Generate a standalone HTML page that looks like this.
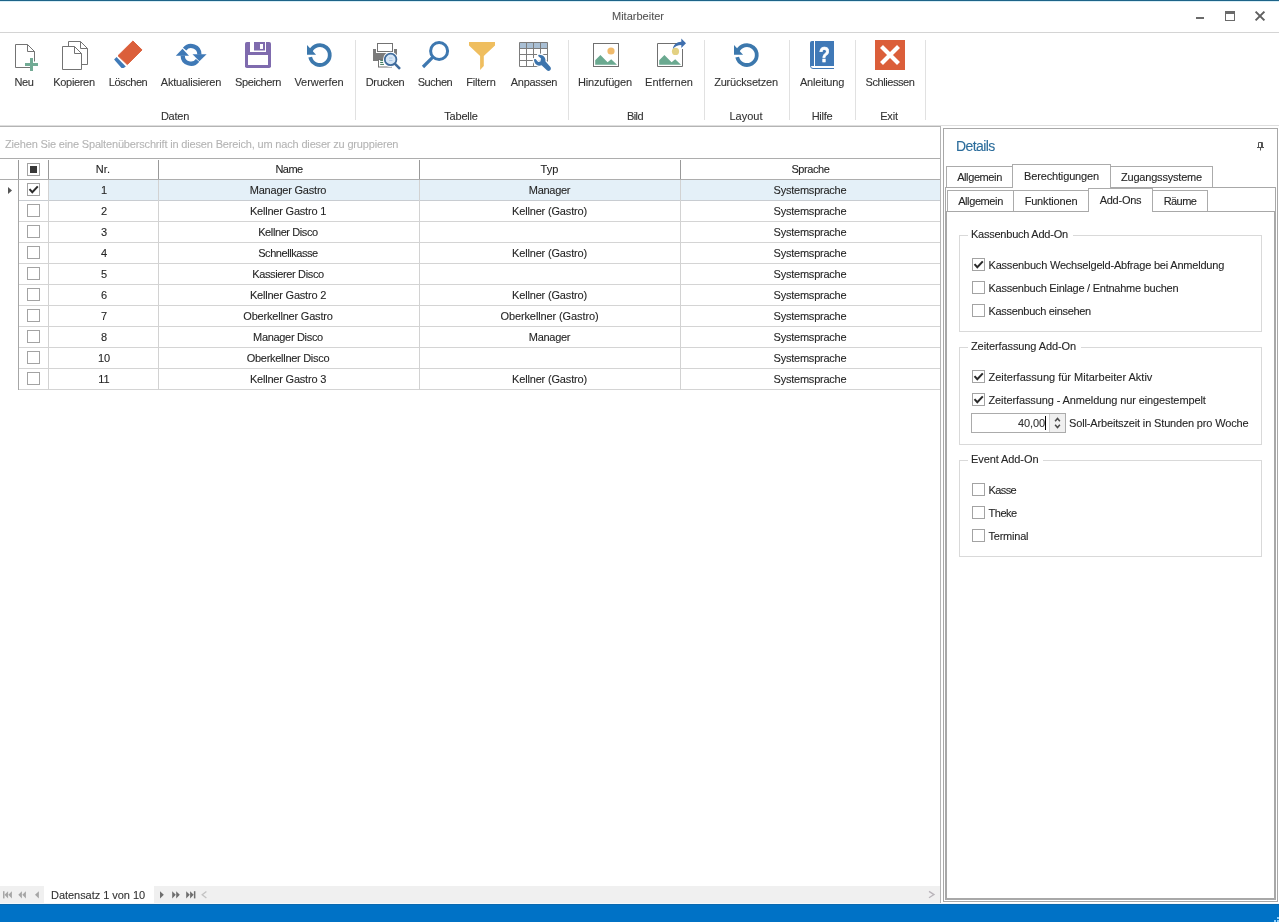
<!DOCTYPE html>
<html lang="de"><head><meta charset="utf-8"><title>Mitarbeiter</title>
<style>
*{box-sizing:border-box;margin:0;padding:0}
html,body{width:1279px;height:922px;overflow:hidden;background:#fff}
body{position:relative;-webkit-text-stroke:0.1px;font-family:"Liberation Sans","DejaVu Sans",sans-serif;font-size:11px;color:#3c3c3c;line-height:13px}
#app{position:absolute;left:0;top:0;width:1279px;height:922px;will-change:transform}
.a{position:absolute}
.t{position:absolute;white-space:nowrap;height:13px;line-height:13px}
.c{text-align:center}
.ln{position:absolute;background:#c6c6c6}
.ic{position:absolute;width:40px;height:40px;overflow:visible}
.lbl{position:absolute;white-space:nowrap;text-align:center;width:100px;margin-left:-50px;top:76px;color:#333}
.grp{position:absolute;white-space:nowrap;text-align:center;width:100px;margin-left:-50px;top:110px;color:#333}
.sep{position:absolute;top:40px;height:80px;width:1px;background:#e1e1e1}
.cb{position:absolute;width:13px;height:13px;border:1px solid #a3a3a3;background:#fff}
.cell{position:absolute;white-space:nowrap;text-align:center;height:13px;line-height:13px;color:#262626}
.tab{position:absolute;border:1px solid #ababab;border-bottom:none;background:#fff;text-align:center;color:#262626;white-space:nowrap}
.gb{position:absolute;border:1px solid #d9d9d9;left:959px;width:303px}
.gbt{position:absolute;background:#fff;padding:0 5px 0 3px;left:968px;white-space:nowrap;color:#262626;height:13px;line-height:13px}
.cl{position:absolute;left:988.5px;white-space:nowrap;color:#262626;height:13px;line-height:13px}
</style></head>
<body>
<div id="app">
<div class="a" style="left:0;top:0;width:1279px;height:1px;background:#1d6388"></div>
<div class="a" style="left:0;top:1px;width:1279px;height:1px;background:#d9eef6"></div>
<div class="t c" style="left:540px;width:196px;top:10px;color:#555;letter-spacing:0.00px">Mitarbeiter</div>
<div class="a" style="left:0;top:32px;width:1279px;height:1px;background:#d4d4d4"></div>
<div class="a" style="left:1196px;top:17px;width:8px;height:2px;background:#6a6a6a"></div>
<div class="a" style="left:1225px;top:11px;width:10px;height:10px;border:1px solid #6a6a6a;border-top-width:3px"></div>
<svg class="a" style="left:1253px;top:9px" width="14" height="14" viewBox="0 0 14 14"><path d="M2.6 2.6 L11.4 11.4 M11.4 2.6 L2.6 11.4" stroke="#5f5f5f" stroke-width="2" fill="none"/></svg>
<svg class="ic" style="left:8px;top:40px" viewBox="0 0 40 40"><path d="M22 27.5 H7.5 V4.5 H19.5 L26.5 11.5 V21.5" fill="#fff" stroke="#737373"/><path d="M19.5 4.5 V11.5 H26.5" fill="none" stroke="#737373"/><path d="M22 18h3v5h5v3h-5v5h-3v-5h-5v-3h5z" fill="#72ab95"/></svg>
<div class="lbl" style="left:24px;letter-spacing:-0.46px">Neu</div>
<svg class="ic" style="left:58px;top:40px" viewBox="0 0 40 40"><path d="M10.5 1.5 H22.5 L29.5 8.5 V24.5 H10.5 Z" fill="#fff" stroke="#737373"/><path d="M22.5 1.5 V8.5 H29.5" fill="none" stroke="#737373"/><path d="M4.5 6.5 H16.5 L23.5 13.5 V29.5 H4.5 Z" fill="#fff" stroke="#737373"/><path d="M16.5 6.5 V13.5 H23.5" fill="none" stroke="#737373"/></svg>
<div class="lbl" style="left:74px;letter-spacing:-0.34px">Kopieren</div>
<svg class="ic" style="left:112px;top:40px" viewBox="0 0 40 40"><path d="M20.9 1 L30 9.9 L15.3 24.6 L6 15.7 Z" fill="#db5f3b" stroke="#db5f3b" stroke-width="1" stroke-linejoin="round"/><path d="M4.5 17 L13.8 26.4 L11.6 27.9 L9.5 27.9 L2.1 19.6 Z" fill="#3f7ab8"/></svg>
<div class="lbl" style="left:128px;letter-spacing:-0.44px">Löschen</div>
<svg class="ic" style="left:175px;top:40px" viewBox="0 0 40 40"><g fill="#3f79b6"><path d="M7.5 8.8 L14 15.7 H0.8 Z"/><path d="M24.4 21.2 L17.5 14.2 H31.6 Z"/></g><g fill="none" stroke="#3f79b6" stroke-width="4.3"><path d="M9.6 9.2 A8.3 8.3 0 0 1 24.4 14.6"/><path d="M22.6 20.4 A8.3 8.3 0 0 1 7.7 15.4"/></g></svg>
<div class="lbl" style="left:191px;letter-spacing:-0.20px">Aktualisieren</div>
<svg class="ic" style="left:242px;top:40px" viewBox="0 0 40 40"><rect x="3" y="2" width="26" height="26" rx="1.8" fill="#7f6bae"/><rect x="8" y="2" width="16" height="10" fill="#fff"/><rect x="12" y="2" width="11" height="8.5" fill="#7f6bae"/><rect x="18" y="4" width="3" height="5" fill="#fff"/><rect x="6" y="15" width="20" height="10" fill="#fff"/></svg>
<div class="lbl" style="left:258px;letter-spacing:-0.39px">Speichern</div>
<svg class="ic" style="left:303px;top:40px" viewBox="0 0 40 40"><path d="M4 4.9 V14.65 H13.1 Z" fill="#3c78ad"/><path d="M7.7 11.3 A9.9 9.9 0 1 1 7.2 17.2" fill="none" stroke="#3c78ad" stroke-width="3.8"/></svg>
<div class="lbl" style="left:319px;letter-spacing:-0.04px">Verwerfen</div>
<svg class="ic" style="left:369px;top:40px" viewBox="0 0 40 40"><path d="M4 9 H7 V13 H25 V9 H28 V21 H4 Z" fill="#7b7b7b"/><rect x="8.5" y="3.5" width="15" height="8" fill="#fff" stroke="#737373"/><rect x="9.5" y="19.5" width="13" height="7.5" fill="#fff" stroke="#737373"/><path d="M11.2 20.6 H14.2 M11.2 22.5 H14.2 M11.2 24.4 H15" stroke="#3f7a5c" stroke-width="1"/><circle cx="21.6" cy="19.4" r="7.6" fill="#fff"/><circle cx="21.6" cy="19.4" r="5.8" fill="#d6e6f6" stroke="#3f6b9c" stroke-width="1.8"/><path d="M20 18 h3.4 M20 20.5 h3.4" stroke="#a9c6e6" stroke-width="1.2"/><path d="M25.8 23.6 L31 28.8" stroke="#3f6b9c" stroke-width="2.6" stroke-linecap="butt"/></svg>
<div class="lbl" style="left:385px;letter-spacing:-0.35px">Drucken</div>
<svg class="ic" style="left:419px;top:40px" viewBox="0 0 40 40"><circle cx="20.1" cy="11" r="8.5" fill="none" stroke="#3e78b0" stroke-width="3"/><path d="M13.6 17.4 L4 27" stroke="#3e78b0" stroke-width="3.2"/></svg>
<div class="lbl" style="left:435px;letter-spacing:-0.47px">Suchen</div>
<svg class="ic" style="left:465px;top:40px" viewBox="0 0 40 40"><path d="M4 2 H30 V5.5 L18.8 16 V26 L15.1 30 V16 L4 5.5 Z" fill="#efbe5f"/></svg>
<div class="lbl" style="left:481px;letter-spacing:-0.12px">Filtern</div>
<svg class="ic" style="left:518px;top:40px" viewBox="0 0 40 40"><rect x="1.5" y="2.5" width="28" height="6" fill="#a9bfd4"/><path d="M1.5 2.5 H29.5 V26.5 H1.5 Z M8.5 2.5 V26.5 M15.5 2.5 V26.5 M22.5 2.5 V26.5 M1.5 8.5 H29.5 M1.5 14.5 H29.5 M1.5 20.5 H29.5" fill="none" stroke="#7c7c7c"/><path d="M20.2 15 C22.2 14.5 24.6 15.2 26.1 16.8 C27.3 18.1 27.7 19.7 27.4 21.2 L32.4 27 C33.3 28.2 32.9 29.6 32.1 30.3 C31.3 31 29.9 31.2 28.9 30.2 L23.6 25.2 C22 25.9 20 25.8 18.6 24.8 C16.8 23.5 15.8 21.3 16 19.2 L17.6 19 L20.2 21.9 L22.4 21.4 L23 18.6 L20.4 16.3 Z" fill="#fff" stroke="#fff" stroke-width="2.6" stroke-linejoin="round"/><path d="M20.2 15 C22.2 14.5 24.6 15.2 26.1 16.8 C27.3 18.1 27.7 19.7 27.4 21.2 L32.4 27 C33.3 28.2 32.9 29.6 32.1 30.3 C31.3 31 29.9 31.2 28.9 30.2 L23.6 25.2 C22 25.9 20 25.8 18.6 24.8 C16.8 23.5 15.8 21.3 16 19.2 L17.6 19 L20.2 21.9 L22.4 21.4 L23 18.6 L20.4 16.3 Z" fill="#3d74ac"/></svg>
<div class="lbl" style="left:534px;letter-spacing:-0.33px">Anpassen</div>
<svg class="ic" style="left:589px;top:40px" viewBox="0 0 40 40"><rect x="4.5" y="3.5" width="25" height="23" fill="#fff" stroke="#707070"/><circle cx="22" cy="11" r="3.6" fill="#f0ba6c"/><path d="M6.2 24.7 V20.3 L11.4 15.1 L18.6 22.3 L22.2 19.2 L28 24.7 Z" fill="#6aa990"/></svg>
<div class="lbl" style="left:605px;letter-spacing:-0.18px">Hinzufügen</div>
<svg class="ic" style="left:653px;top:40px" viewBox="0 0 40 40"><path d="M25.4 3.5 H4.5 V26.5 H29.5 V9" fill="#fff" stroke="#707070"/><circle cx="22.5" cy="11.4" r="3.6" fill="#e3d183"/><path d="M6.2 24.7 V20.3 L11.4 15.1 L18.6 22.3 L22.2 19.2 L28 24.7 Z" fill="#6aa990"/><path d="M19.8 9 C20.5 4.5 24 1.6 28.3 1.7 V-1.4 L33 3.3 L28.3 7.9 V4.9 C25 4.9 22 6 19.8 9 Z" fill="#3f6fae"/></svg>
<div class="lbl" style="left:669px;letter-spacing:0.01px">Entfernen</div>
<svg class="ic" style="left:730px;top:40px" viewBox="0 0 40 40"><path d="M4 4.9 V14.65 H13.1 Z" fill="#3c78ad"/><path d="M7.7 11.3 A9.9 9.9 0 1 1 7.2 17.2" fill="none" stroke="#3c78ad" stroke-width="3.8"/></svg>
<div class="lbl" style="left:746px;letter-spacing:-0.20px">Zurücksetzen</div>
<svg class="ic" style="left:806px;top:40px" viewBox="0 0 40 40"><path d="M4 3 Q4 1 6 1 H8 V26 H4 Z" fill="#4079b7"/><rect x="9" y="1" width="19" height="25" fill="#4079b7"/><path d="M4.5 25 V26 Q4.5 28.5 7 28.5 H28" fill="none" stroke="#4079b7" stroke-width="1"/><text transform="translate(18.4 21.6) scale(.78 1)" x="0" y="0" text-anchor="middle" font-family="Liberation Sans, sans-serif" font-weight="bold" font-size="22.5" fill="#fff" stroke="#fff" stroke-width=".7">?</text></svg>
<div class="lbl" style="left:822px;letter-spacing:-0.18px">Anleitung</div>
<svg class="ic" style="left:874px;top:40px" viewBox="0 0 40 40"><rect x="1" y="0" width="30" height="30" fill="#db5e3a"/><path d="M7.5 6.5 L24.5 23.5 M24.5 6.5 L7.5 23.5" stroke="#fff" stroke-width="4.2"/></svg>
<div class="lbl" style="left:890px;letter-spacing:-0.44px">Schliessen</div>
<div class="grp" style="left:175px;letter-spacing:-0.23px">Daten</div>
<div class="grp" style="left:461px;letter-spacing:-0.19px">Tabelle</div>
<div class="grp" style="left:635px;letter-spacing:-0.60px">Bild</div>
<div class="grp" style="left:746px;letter-spacing:0.01px">Layout</div>
<div class="grp" style="left:822px;letter-spacing:-0.26px">Hilfe</div>
<div class="grp" style="left:889px;letter-spacing:-0.16px">Exit</div>
<div class="sep" style="left:355px"></div>
<div class="sep" style="left:568px"></div>
<div class="sep" style="left:704px"></div>
<div class="sep" style="left:789px"></div>
<div class="sep" style="left:855px"></div>
<div class="sep" style="left:925px"></div>
<div class="a" style="left:0;top:125px;width:1279px;height:1px;background:#dedede"></div>
<div class="a" style="left:0;top:126px;width:941px;height:1px;background:#b4b4b4"></div>
<div class="t" style="left:5px;top:138px;color:#b4b4b4;letter-spacing:-0.17px">Ziehen Sie eine Spaltenüberschrift in diesen Bereich, um nach dieser zu gruppieren</div>
<div class="a" style="left:49px;top:180px;width:891px;height:20px;background:#e4f0f8"></div>
<div class="ln" style="left:0;top:158px;width:940px;height:1px;background:#adadad"></div>
<div class="ln" style="left:0;top:179px;width:940px;height:1px;background:#adadad"></div>
<div class="ln" style="left:18px;top:200px;width:922px;height:1px;background:#c8ccd1"></div>
<div class="ln" style="left:18px;top:221px;width:922px;height:1px;background:#d4d4d4"></div>
<div class="ln" style="left:18px;top:242px;width:922px;height:1px;background:#d4d4d4"></div>
<div class="ln" style="left:18px;top:263px;width:922px;height:1px;background:#d4d4d4"></div>
<div class="ln" style="left:18px;top:284px;width:922px;height:1px;background:#d4d4d4"></div>
<div class="ln" style="left:18px;top:305px;width:922px;height:1px;background:#d4d4d4"></div>
<div class="ln" style="left:18px;top:326px;width:922px;height:1px;background:#d4d4d4"></div>
<div class="ln" style="left:18px;top:347px;width:922px;height:1px;background:#d4d4d4"></div>
<div class="ln" style="left:18px;top:368px;width:922px;height:1px;background:#d4d4d4"></div>
<div class="ln" style="left:18px;top:389px;width:922px;height:1px;background:#d4d4d4"></div>
<div class="ln" style="left:18px;top:160px;width:1px;height:19px;background:#999"></div>
<div class="ln" style="left:18px;top:180px;width:1px;height:210px;background:#a6a6a6"></div>
<div class="ln" style="left:48px;top:160px;width:1px;height:19px;background:#999"></div>
<div class="ln" style="left:48px;top:180px;width:1px;height:210px;background:#d2d2d2"></div>
<div class="ln" style="left:158px;top:160px;width:1px;height:19px;background:#999"></div>
<div class="ln" style="left:158px;top:180px;width:1px;height:210px;background:#d2d2d2"></div>
<div class="ln" style="left:419px;top:160px;width:1px;height:19px;background:#999"></div>
<div class="ln" style="left:419px;top:180px;width:1px;height:210px;background:#d2d2d2"></div>
<div class="ln" style="left:680px;top:160px;width:1px;height:19px;background:#999"></div>
<div class="ln" style="left:680px;top:180px;width:1px;height:210px;background:#d2d2d2"></div>
<div class="ln" style="left:940px;top:126px;width:1px;height:778px;background:#b4b4b4"></div>
<div class="cb" style="left:27px;top:163px"><div class="a" style="left:2px;top:2px;width:7px;height:7px;background:#383838"></div></div>
<div class="cell" style="left:43px;width:120px;top:163px;letter-spacing:0.15px">Nr.</div>
<div class="cell" style="left:229px;width:120px;top:163px;letter-spacing:-0.60px">Name</div>
<div class="cell" style="left:489.5px;width:120px;top:163px;letter-spacing:0.02px">Typ</div>
<div class="cell" style="left:750.5px;width:120px;top:163px;letter-spacing:-0.41px">Sprache</div>
<div class="cb" style="left:27px;top:183px"><svg class="a" style="left:0;top:0" width="11" height="11" viewBox="0 0 11 11"><path d="M1.5 5.1 L4.3 8.2 L9.8 2.4" fill="none" stroke="#2b2b2b" stroke-width="2"/></svg></div>
<div class="cell" style="left:49.5px;width:109px;top:184px">1</div>
<div class="cell" style="left:158px;width:260px;top:184px;letter-spacing:-0.21px">Manager Gastro</div>
<div class="cell" style="left:419.5px;width:260px;top:184px;letter-spacing:-0.29px">Manager</div>
<div class="cell" style="left:681px;width:258px;top:184px;letter-spacing:-0.23px">Systemsprache</div>
<div class="cb" style="left:27px;top:204px"></div>
<div class="cell" style="left:49.5px;width:109px;top:205px">2</div>
<div class="cell" style="left:158px;width:260px;top:205px;letter-spacing:-0.21px">Kellner Gastro 1</div>
<div class="cell" style="left:419.5px;width:260px;top:205px;letter-spacing:-0.17px">Kellner (Gastro)</div>
<div class="cell" style="left:681px;width:258px;top:205px;letter-spacing:-0.23px">Systemsprache</div>
<div class="cb" style="left:27px;top:225px"></div>
<div class="cell" style="left:49.5px;width:109px;top:226px">3</div>
<div class="cell" style="left:158px;width:260px;top:226px;letter-spacing:-0.40px">Kellner Disco</div>
<div class="cell" style="left:681px;width:258px;top:226px;letter-spacing:-0.23px">Systemsprache</div>
<div class="cb" style="left:27px;top:246px"></div>
<div class="cell" style="left:49.5px;width:109px;top:247px">4</div>
<div class="cell" style="left:158px;width:260px;top:247px;letter-spacing:-0.44px">Schnellkasse</div>
<div class="cell" style="left:419.5px;width:260px;top:247px;letter-spacing:-0.17px">Kellner (Gastro)</div>
<div class="cell" style="left:681px;width:258px;top:247px;letter-spacing:-0.23px">Systemsprache</div>
<div class="cb" style="left:27px;top:267px"></div>
<div class="cell" style="left:49.5px;width:109px;top:268px">5</div>
<div class="cell" style="left:158px;width:260px;top:268px;letter-spacing:-0.36px">Kassierer Disco</div>
<div class="cell" style="left:681px;width:258px;top:268px;letter-spacing:-0.23px">Systemsprache</div>
<div class="cb" style="left:27px;top:288px"></div>
<div class="cell" style="left:49.5px;width:109px;top:289px">6</div>
<div class="cell" style="left:158px;width:260px;top:289px;letter-spacing:-0.21px">Kellner Gastro 2</div>
<div class="cell" style="left:419.5px;width:260px;top:289px;letter-spacing:-0.17px">Kellner (Gastro)</div>
<div class="cell" style="left:681px;width:258px;top:289px;letter-spacing:-0.23px">Systemsprache</div>
<div class="cb" style="left:27px;top:309px"></div>
<div class="cell" style="left:49.5px;width:109px;top:310px">7</div>
<div class="cell" style="left:158px;width:260px;top:310px;letter-spacing:-0.20px">Oberkellner Gastro</div>
<div class="cell" style="left:419.5px;width:260px;top:310px;letter-spacing:-0.11px">Oberkellner (Gastro)</div>
<div class="cell" style="left:681px;width:258px;top:310px;letter-spacing:-0.23px">Systemsprache</div>
<div class="cb" style="left:27px;top:330px"></div>
<div class="cell" style="left:49.5px;width:109px;top:331px">8</div>
<div class="cell" style="left:158px;width:260px;top:331px;letter-spacing:-0.32px">Manager Disco</div>
<div class="cell" style="left:419.5px;width:260px;top:331px;letter-spacing:-0.29px">Manager</div>
<div class="cell" style="left:681px;width:258px;top:331px;letter-spacing:-0.23px">Systemsprache</div>
<div class="cb" style="left:27px;top:351px"></div>
<div class="cell" style="left:49.5px;width:109px;top:352px">10</div>
<div class="cell" style="left:158px;width:260px;top:352px;letter-spacing:-0.29px">Oberkellner Disco</div>
<div class="cell" style="left:681px;width:258px;top:352px;letter-spacing:-0.23px">Systemsprache</div>
<div class="cb" style="left:27px;top:372px"></div>
<div class="cell" style="left:49.5px;width:109px;top:373px">11</div>
<div class="cell" style="left:158px;width:260px;top:373px;letter-spacing:-0.21px">Kellner Gastro 3</div>
<div class="cell" style="left:419.5px;width:260px;top:373px;letter-spacing:-0.17px">Kellner (Gastro)</div>
<div class="cell" style="left:681px;width:258px;top:373px;letter-spacing:-0.23px">Systemsprache</div>
<svg class="a" style="left:7px;top:186px" width="6" height="9" viewBox="0 0 6 9"><path d="M1 1 L5 4.5 L1 8 Z" fill="#555"/></svg>
<div class="a" style="left:0;top:886px;width:940px;height:17px;background:#f0f0f0"></div>
<div class="a" style="left:44px;top:886px;width:110px;height:17px;background:#fff"></div>
<div class="t" style="left:51px;top:889px;color:#333;letter-spacing:-0.04px">Datensatz 1 von 10</div>
<svg class="a" style="left:0;top:886px" width="215" height="18" viewBox="0 0 215 18"><g fill="#a6a6a6"><rect x="3" y="5.2" width="1.5" height="7.2"/><path d="M8.1 5.2 V12.4 L4.5 8.8 Z M11.9 5.2 V12.4 L8.3 8.8 Z"/><path d="M21.9 5.2 V12.4 L18.3 8.8 Z M25.9 5.2 V12.4 L22.3 8.8 Z"/><path d="M38.9 5.2 V12.4 L35 8.8 Z"/></g><g fill="#6e6e6e"><path d="M160 5.2 V12.4 L163.8 8.8 Z"/><path d="M172.2 5.2 V12.4 L175.8 8.8 Z M176.2 5.2 V12.4 L179.8 8.8 Z"/><path d="M186.2 5.2 V12.4 L189.8 8.8 Z M190.1 5.2 V12.4 L193.7 8.8 Z"/><rect x="193.9" y="5.2" width="1.5" height="7.2"/></g><path d="M206.4 5.6 L202.2 8.8 L206.4 12" fill="none" stroke="#c2c2c2" stroke-width="1.3"/></svg>
<svg class="a" style="left:926px;top:888px" width="12" height="12" viewBox="0 0 12 12"><path d="M3 3.4 L8 6.6 L3 9.8" fill="none" stroke="#b9b4ba" stroke-width="1.3"/></svg>
<div class="a" style="left:0;top:903px;width:1279px;height:1px;background:#f2f8fc"></div>
<div class="a" style="left:0;top:904px;width:1279px;height:18px;background:#0072c6;border-top:1px solid #0b68ae"></div>
<div class="a" style="left:1277px;top:917px;width:2px;height:2px;background:#8ccdfb"></div>
<div class="a" style="left:1274px;top:920px;width:2px;height:2px;background:#8ccdfb"></div>
<div class="a" style="left:1277px;top:920px;width:2px;height:2px;background:#8ccdfb"></div>
<div class="a" style="left:943px;top:128px;width:335px;height:774px;border:1px solid #a8a8a8"></div>
<div class="t" style="left:956px;top:138px;height:17px;line-height:17px;font-size:14px;color:#2b6c9b;letter-spacing:-0.60px">Details</div>
<svg class="a" style="left:1256px;top:141px" width="9" height="10" viewBox="0 0 9 10"><path d="M2.5 1.5 H6.5 M2.5 1.5 V6 M5.5 1.5 V6 M6.5 1.5 V6 M1 6.5 H8 M4.5 7 V9.5" fill="none" stroke="#555" stroke-width="1"/></svg>
<div class="a" style="left:945px;top:187px;width:331px;height:713px;border:1px solid #a8a8a8"></div>
<div class="tab" style="left:946px;top:166px;width:67px;height:21px;line-height:21px;letter-spacing:-0.40px">Allgemein</div>
<div class="tab" style="left:1110px;top:166px;width:103px;height:21px;line-height:21px;letter-spacing:-0.20px">Zugangssysteme</div>
<div class="tab" style="left:1012px;top:164px;width:99px;height:24px;line-height:22px;letter-spacing:-0.15px">Berechtigungen</div>
<div class="a" style="left:946px;top:211px;width:329px;height:688px;border:1px solid #a8a8a8"></div>
<div class="tab" style="left:947px;top:190px;width:67px;height:21px;line-height:21px;letter-spacing:-0.40px">Allgemein</div>
<div class="tab" style="left:1013px;top:190px;width:76px;height:21px;line-height:21px;letter-spacing:-0.17px">Funktionen</div>
<div class="tab" style="left:1152px;top:190px;width:56px;height:21px;line-height:21px;letter-spacing:-0.55px">Räume</div>
<div class="tab" style="left:1088px;top:188px;width:65px;height:24px;line-height:22px;letter-spacing:-0.25px">Add-Ons</div>
<div class="gb" style="top:235px;height:97px"></div>
<div class="gbt" style="top:228px;letter-spacing:-0.24px">Kassenbuch Add-On</div>
<div class="cb" style="left:972px;top:258px"><svg class="a" style="left:0;top:0" width="11" height="11" viewBox="0 0 11 11"><path d="M1.5 5.1 L4.3 8.2 L9.8 2.4" fill="none" stroke="#2b2b2b" stroke-width="2"/></svg></div>
<div class="cl" style="top:259px;letter-spacing:-0.20px">Kassenbuch Wechselgeld-Abfrage bei Anmeldung</div>
<div class="cb" style="left:972px;top:281px"></div>
<div class="cl" style="top:282px;letter-spacing:-0.25px">Kassenbuch Einlage / Entnahme buchen</div>
<div class="cb" style="left:972px;top:304px"></div>
<div class="cl" style="top:305px;letter-spacing:-0.31px">Kassenbuch einsehen</div>
<div class="gb" style="top:347px;height:98px"></div>
<div class="gbt" style="top:340px;letter-spacing:-0.10px">Zeiterfassung Add-On</div>
<div class="cb" style="left:972px;top:370px"><svg class="a" style="left:0;top:0" width="11" height="11" viewBox="0 0 11 11"><path d="M1.5 5.1 L4.3 8.2 L9.8 2.4" fill="none" stroke="#2b2b2b" stroke-width="2"/></svg></div>
<div class="cl" style="top:371px;letter-spacing:0.00px">Zeiterfassung für Mitarbeiter Aktiv</div>
<div class="cb" style="left:972px;top:393px"><svg class="a" style="left:0;top:0" width="11" height="11" viewBox="0 0 11 11"><path d="M1.5 5.1 L4.3 8.2 L9.8 2.4" fill="none" stroke="#2b2b2b" stroke-width="2"/></svg></div>
<div class="cl" style="top:394px;letter-spacing:-0.11px">Zeiterfassung - Anmeldung nur eingestempelt</div>
<div class="a" style="left:971px;top:413px;width:95px;height:20px;border:1px solid #ababab;background:#fff"></div>
<div class="a" style="left:1049px;top:414px;width:16px;height:18px;background:#f0f0f0;border-left:1px solid #d0d0d0"></div>
<svg class="a" style="left:1053px;top:416px" width="9" height="14" viewBox="0 0 9 14"><path d="M2.1 5.2 L4.5 2.5 L6.9 5.2 M2.1 8.8 L4.5 11.5 L6.9 8.8" fill="none" stroke="#4a4a4a" stroke-width="1.5"/></svg>
<div class="t" style="left:990px;width:55px;text-align:right;top:417px;color:#333;letter-spacing:-0.11px">40,00</div>
<div class="a" style="left:1045px;top:416px;width:1px;height:14px;background:#000"></div>
<div class="cl" style="left:1069px;top:417px;letter-spacing:-0.15px">Soll-Arbeitszeit in Stunden pro Woche</div>
<div class="gb" style="top:460px;height:97px"></div>
<div class="gbt" style="top:453px;letter-spacing:-0.09px">Event Add-On</div>
<div class="cb" style="left:972px;top:483px"></div>
<div class="cl" style="top:484px;letter-spacing:-0.60px">Kasse</div>
<div class="cb" style="left:972px;top:506px"></div>
<div class="cl" style="top:507px;letter-spacing:-0.48px">Theke</div>
<div class="cb" style="left:972px;top:529px"></div>
<div class="cl" style="top:530px;letter-spacing:-0.22px">Terminal</div>
</div>
</body></html>
